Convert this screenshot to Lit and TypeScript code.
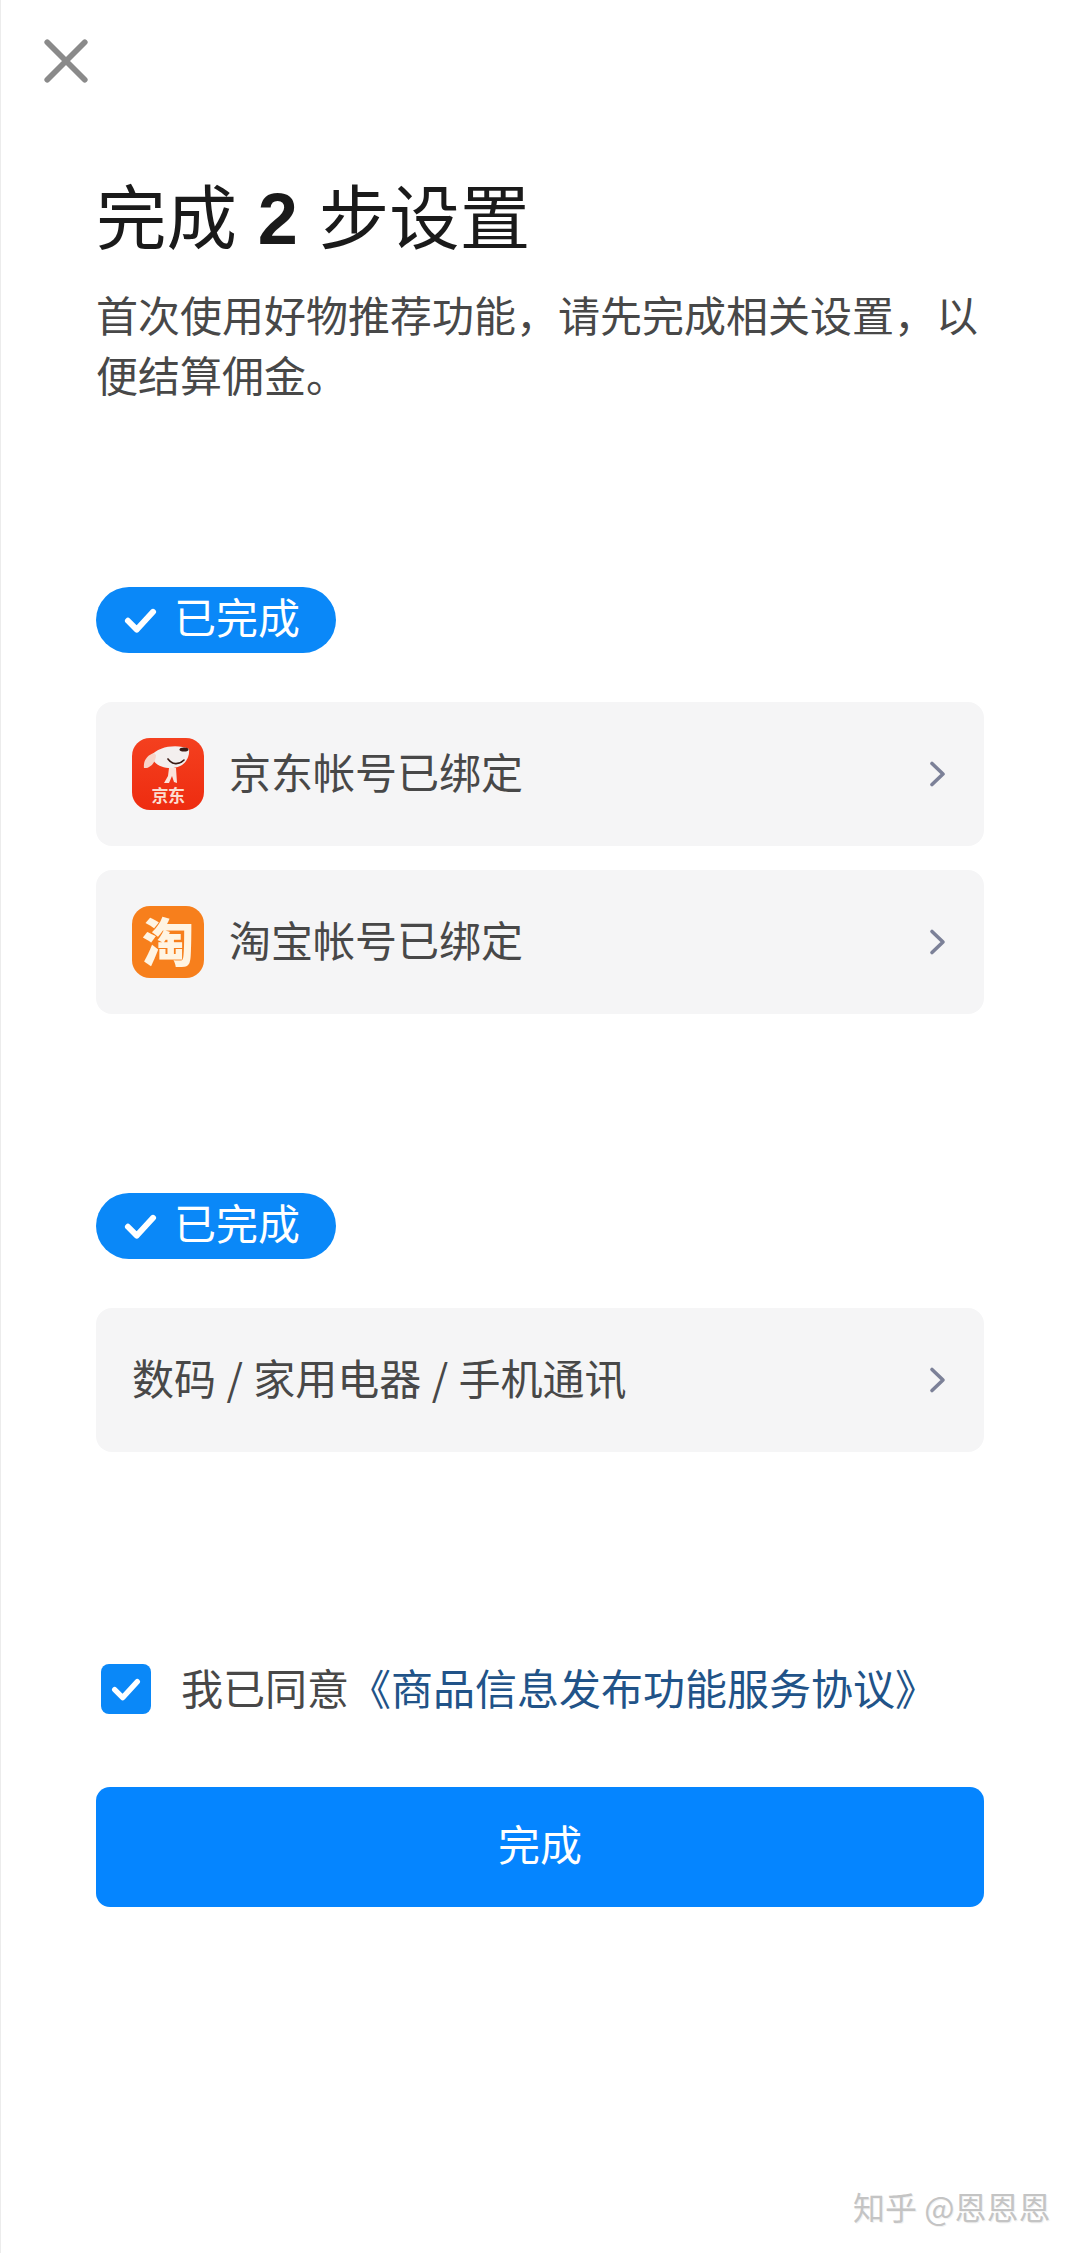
import { LitElement, html, css, svg } from "lit";
import { customElement } from "lit/decorators.js";

const check = svg`<path d="M4 12.5 L10 18.5 L21 6.5" fill="none" stroke="#fff" stroke-width="4" stroke-linecap="round" stroke-linejoin="round"/>`;

@customElement("app-root")
export class AppRoot extends LitElement {
  static styles = css`
    :host {
      display: block;
      width: 1080px;
      height: 2253px;
      box-sizing: border-box;
      background: #fff;
      border-left: 1px solid #ececec;
      overflow: hidden;
      position: relative;
      font-family: "Noto Sans CJK SC", "Noto Sans", sans-serif;
      color: #444;
    }
    .close { display: block; width: 50px; height: 50px; margin: 36px 0 0 40px; }
    .content { padding: 0 96px 0 95px; display: flex; flex-direction: column; }
    h1 {
      margin: 82px 0 0; font-size: 70.5px; line-height: 90px; font-weight: 400;
      color: #1a1a1a; white-space: nowrap; word-spacing: 5px;
    }
    h1 b { font-family: "Liberation Sans", sans-serif; font-weight: 700; font-size: 72px; }
    .sub {
      margin: 20px 0 0; font-size: 42px; line-height: 60px; color: #484848;
    }
    .pill {
      align-self: flex-start; display: flex; align-items: center; gap: 15px;
      width: 240px; height: 66px; box-sizing: border-box; padding-left: 26px;
      background: #0a88f8; border-radius: 33px; color: #fff;
      font-size: 42px; line-height: 58px;
    }
    .pill span { padding-bottom: 8px; }
    .pill svg { width: 37px; height: 36px; flex: none; }
    .first { margin-top: 183px; }
    .second { margin-top: 179px; }
    .cards { display: flex; flex-direction: column; gap: 24px; margin-top: 49px; }
    .card {
      display: flex; align-items: center; height: 144px; box-sizing: border-box;
      padding: 0 36px; background: #f5f5f6; border-radius: 16px;
      font-size: 42px; color: #484848;
    }
    .logo {
      width: 72px; height: 72px; border-radius: 18px; flex: none; margin-right: 25px;
      position: relative; display: flex; align-items: center; justify-content: center;
    }
    .logo svg { position: absolute; inset: 0; width: 72px; height: 72px; }
    .jd { background: linear-gradient(180deg, #f4401f, #ee2c10); }
    .jd span {
      position: absolute; left: 0; right: 0; bottom: 5px; text-align: center;
      font-size: 17px; line-height: 20px; font-weight: 700; color: #fbdcd0; letter-spacing: -0.5px;
    }
    .tb { background: #f77f1c; color: #fff4e2; font-size: 52px; font-weight: 900; line-height: 60px; padding-bottom: 4px; box-sizing: border-box; }
    .label { flex: 1; white-space: nowrap; padding-bottom: 8px; }
    .plain { word-spacing: 1px; }
    .chev { width: 20px; height: 28px; flex: none; }
    .agree { display: flex; align-items: center; margin-top: 212px; height: 50px; padding-left: 5px; font-size: 42px; white-space: nowrap; color: #484848; }
    .agree > span { padding-bottom: 6px; }
    .box { width: 50px; height: 50px; border-radius: 8px; background: #0a88f8; flex: none; margin-right: 30px; display: flex; align-items: center; justify-content: center; }
    .box svg { width: 34px; height: 32px; }
    .link { color: #215388; }
    .btn {
      margin-top: 73px; height: 120px; box-sizing: border-box; padding-bottom: 10px; border-radius: 14px;
      background: #0585ff; color: #fff;
      display: flex; align-items: center; justify-content: center; font-size: 42px;
    }
    .wm {
      position: absolute; left: 852px; top: 2184px; font-size: 32px; line-height: 44px;
      color: #c4c4c4; white-space: nowrap; text-shadow: 1px 1px 0 #f2f2f2;
    }
  `;

  private chevron() {
    return html`<svg class="chev" viewBox="0 0 20 28"><path d="M4 3.5 L15 14 L4 24.5" fill="none" stroke="#7c8198" stroke-width="3.6" stroke-linecap="round" stroke-linejoin="round"/></svg>`;
  }

  private jdLogo() {
    return html`<div class="logo jd">
      <svg viewBox="0 0 72 72">
        <path d="M19 18 C26 8 46 6 57 11 C58 19 53 30 39 30 C29 30 22 26 19 18Z" fill="#f3efee"/>
        <path d="M22 15 C15 17 11 23 12 30 C18 31 24 24 24 17Z" fill="#f7d5ca"/>
        <ellipse cx="52" cy="11.5" rx="4.5" ry="2" fill="#3a1a14"/>
        <path d="M36 21 C40 27 47 27 52 22" fill="none" stroke="#3a1a14" stroke-width="1.6" stroke-linecap="round"/>
        <path d="M37 30 L44 30 L45 45 L42 44 L40 38 L37 45 L32 45 L36 38Z" fill="#fbe3da"/>
      </svg>
      <span>京东</span>
    </div>`;
  }

  render() {
    return html`
      <svg class="close" viewBox="0 0 48 48"><path d="M6 6 L42 42 M42 6 L6 42" stroke="#8a8a8a" stroke-width="5.5" stroke-linecap="round"/></svg>
      <div class="content">
        <h1>完成 <b>2</b> 步设置</h1>
        <p class="sub">首次使用好物推荐功能，请先完成相关设置，以便结算佣金。</p>
        <div class="pill first"><svg viewBox="0 0 25 24">${check}</svg><span>已完成</span></div>
        <div class="cards">
          <div class="card">${this.jdLogo()}<span class="label">京东帐号已绑定</span>${this.chevron()}</div>
          <div class="card"><div class="logo tb">淘</div><span class="label">淘宝帐号已绑定</span>${this.chevron()}</div>
        </div>
        <div class="pill second"><svg viewBox="0 0 25 24">${check}</svg><span>已完成</span></div>
        <div class="cards">
          <div class="card"><span class="label plain">数码 / 家用电器 / 手机通讯</span>${this.chevron()}</div>
        </div>
        <div class="agree">
          <div class="box"><svg viewBox="0 0 25 24">${check}</svg></div>
          <span>我已同意<span class="link">《商品信息发布功能服务协议》</span></span>
        </div>
        <div class="btn">完成</div>
      </div>
      <div class="wm">知乎 @恩恩恩</div>
    `;
  }
}
